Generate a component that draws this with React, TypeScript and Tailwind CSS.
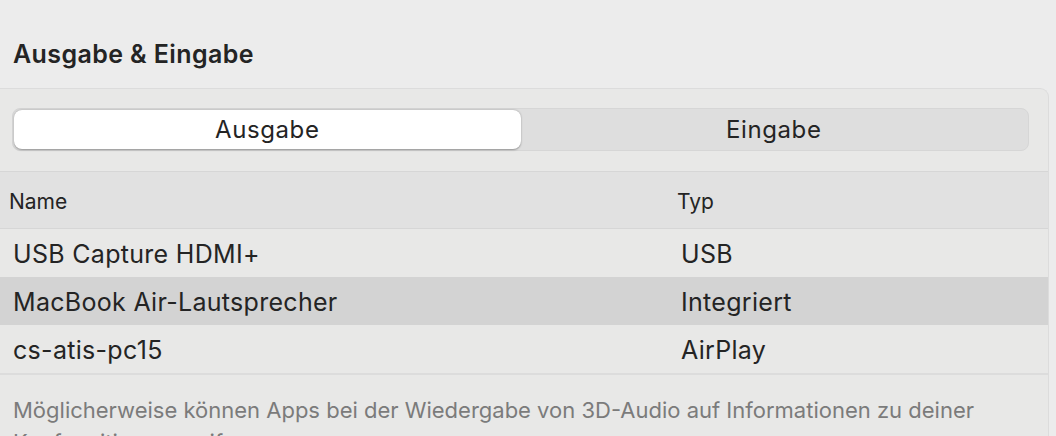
import { useState } from "react";

const devices = [
  { name: "USB Capture HDMI+", type: "USB" },
  { name: "MacBook Air-Lautsprecher", type: "Integriert" },
  { name: "cs-atis-pc15", type: "AirPlay" },
];

const App = () => {
  const [tab, setTab] = useState<"out" | "in">("out");
  const [selected, setSelected] = useState(1);

  return (
    <div
      className="h-[436px] w-[1056px] overflow-hidden bg-[#ececec] text-[#242424]"
      style={{ fontFamily: "Inter, 'Noto Sans', sans-serif" }}
    >
      <h1 className="px-[13px] pt-[39px] pb-[19px] text-[25px] font-semibold leading-[30px] tracking-[0.4px]">
        Ausgabe &amp; Eingabe
      </h1>

      <div className="-ml-2 mr-[7px] rounded-tr-[9px] border-t border-r border-[#dcdcdc] bg-[#e8e8e7]">
        <div className="pl-[20px] pr-[19px] pt-[19px] pb-[20px]">
          <div className="flex h-[43px] rounded-[8px] border border-[#d6d6d6] bg-[#dedede] p-px">
            <button
              onClick={() => setTab("out")}
              className={`flex-1 rounded-[8px] text-[24px] tracking-[0.6px] ${
                tab === "out" ? "bg-white shadow-[0_0.5px_2px_rgba(0,0,0,0.35)]" : ""
              }`}
            >
              Ausgabe
            </button>
            <button
              onClick={() => setTab("in")}
              className={`flex-1 rounded-[8px] text-[24px] tracking-[0.6px] ${
                tab === "in" ? "bg-white shadow-[0_0.5px_2px_rgba(0,0,0,0.35)]" : ""
              }`}
            >
              Eingabe
            </button>
          </div>
        </div>

        <div className="flex h-[58px] items-center border-y border-[#d6d6d6] bg-[#e1e1e1] pt-[4px] text-[21px]">
          <div className="w-[685px] pl-[17px]">Name</div>
          <div>Typ</div>
        </div>

        {devices.map((d, i) => (
          <div
            key={d.name}
            onClick={() => setSelected(i)}
            className={`flex h-[48px] items-center pt-[4px] text-[25px] tracking-[0.3px] ${
              i === selected ? "bg-[#d3d3d3]" : ""
            }`}
          >
            <div className="w-[689px] pl-[21px]">{d.name}</div>
            <div>{d.type}</div>
          </div>
        ))}

        <div className="border-t-2 border-[#dcdcdc] pl-[21px] pr-4 pt-[19px] text-[22px] leading-[32px] text-[#7b7b7b]">
          Möglicherweise können Apps bei der Wiedergabe von 3D-Audio auf Informationen zu deiner
          Kopfposition zugreifen.
        </div>
      </div>
    </div>
  );
};

export default App;
